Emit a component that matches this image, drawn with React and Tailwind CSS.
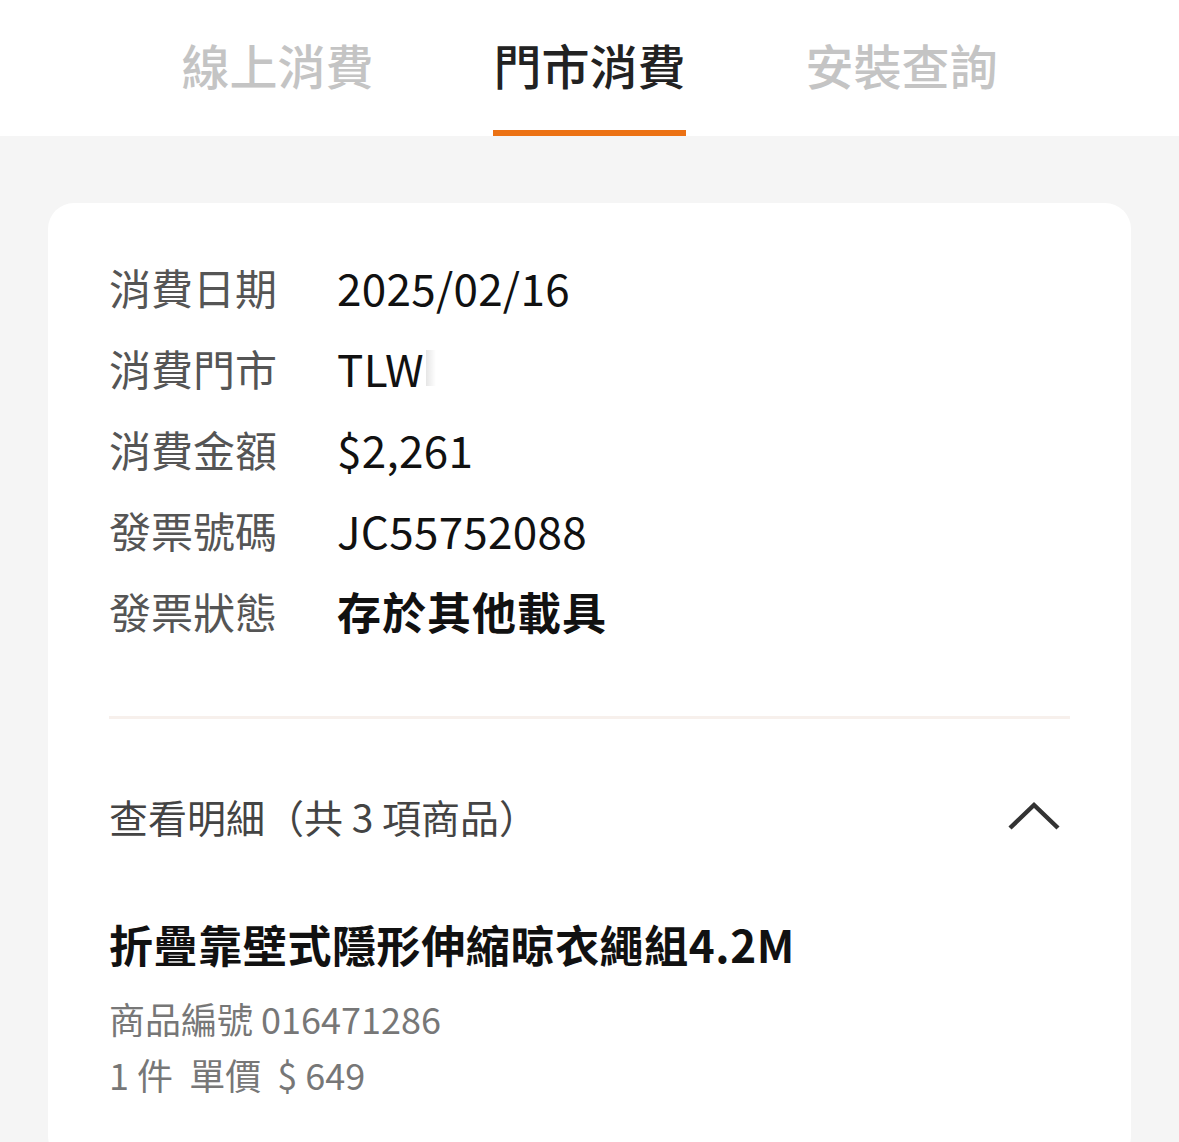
import React from 'react'

const font = { fontFamily: '"Noto Sans CJK TC", "Noto Sans", sans-serif' }

function Tabs() {
    const tabs = ['線上消費', '門市消費', '安裝查詢']
    return (
        <div className="bg-white h-[136px] flex justify-center">
            {tabs.map((t, i) => (
                <div key={t} className="w-[312px] flex flex-col items-center">
                    <div
                        className={
                            i === 1
                                ? 'h-[130px] pb-[3px] flex items-center px-[2px] text-[48px] font-medium text-[#222222] leading-none'
                                : 'h-[130px] pb-[3px] flex items-center text-[48px] font-medium text-[#c4c4c4] leading-none'
                        }
                    >
                        {t}
                    </div>
                    {i === 1 ? <div className="w-[193px] h-[6px] bg-[#ec7214]" /> : null}
                </div>
            ))}
        </div>
    )
}

function Row({ label, children, bold }) {
    return (
        <div className="flex items-center h-[81px]">
            <div className="w-[228px] text-[42px] text-[#555555] leading-none">{label}</div>
            <div className={bold ? 'text-[44px] font-bold tracking-[1px] text-[#111111] leading-none' : 'text-[44px] tracking-[0.3px] text-[#111111] leading-none'}>
                {children}
            </div>
        </div>
    )
}

export default function App() {
    return (
        <div style={font} className="w-[1179px] h-[1142px] bg-[#f5f5f5] overflow-hidden">
            <Tabs />
            <div className="px-[48px] pt-[67px]">
                <div className="bg-white rounded-[26px] px-[61px] pt-[43px] pb-[60px]">
                    <Row label="消費日期">2025/02/16</Row>
                    <Row label="消費門市">
                        <span className="flex items-center">
                            TLW
                            <span className="inline-block w-[10px] h-[36px] ml-[2px] bg-gradient-to-r from-[#e6e6e6] to-white" />
                        </span>
                    </Row>
                    <Row label="消費金額">$2,261</Row>
                    <Row label="發票號碼">JC55752088</Row>
                    <Row label="發票狀態" bold>存於其他載具</Row>
                    <div className="h-[3px] bg-[#f7f0ec] mt-[65px]" />
                    <div className="flex items-center justify-between h-[194px]">
                        <div className="text-[39px] text-[#444444] leading-none">查看明細（共 3 項商品）</div>
                        <svg width="56" height="32" viewBox="0 0 56 32" className="mr-[8px]">
                            <path d="M4 28 L28 5 L52 28" fill="none" stroke="#333333" strokeWidth="4.5" />
                        </svg>
                    </div>
                    <div className="mt-[9px] text-[44px] font-bold tracking-[0.6px] text-[#111111] leading-none">折疊靠壁式隱形伸縮晾衣繩組4.2M</div>
                    <div className="mt-[24px] text-[36px] text-[#777777] leading-[56px]">商品編號 016471286</div>
                    <div className="text-[36px] text-[#777777] leading-[56px] whitespace-pre">1 件  單價  $ 649</div>
                </div>
            </div>
        </div>
    )
}
